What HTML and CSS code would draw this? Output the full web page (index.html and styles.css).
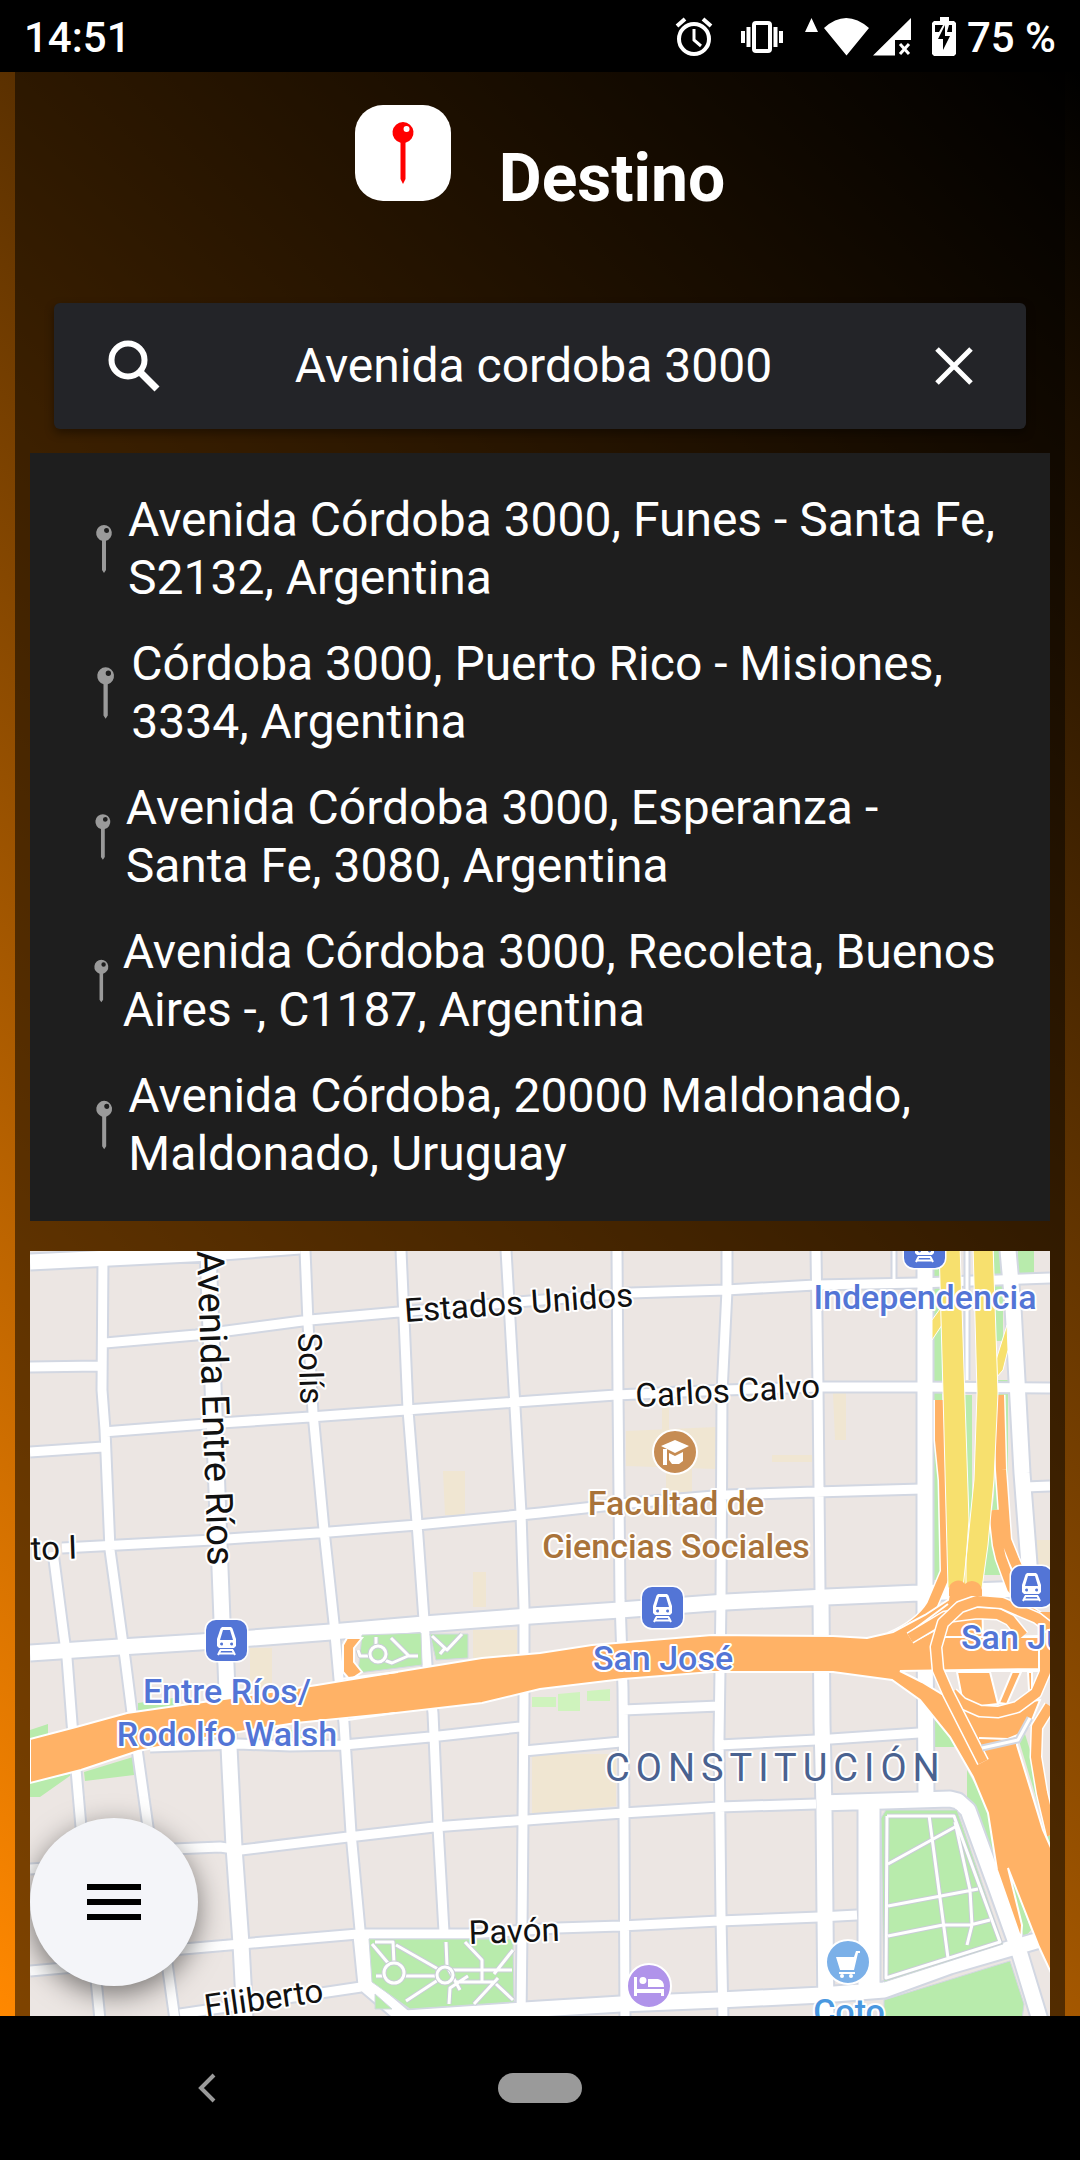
FILE: index.html
```html
<!DOCTYPE html>
<html lang="es">
<head>
<meta charset="utf-8">
<meta name="viewport" content="width=device-width, initial-scale=1">
<title>Destino</title>
<link rel="stylesheet" href="styles.css">
</head>
<body>
<svg class="defs" aria-hidden="true">
  <defs>
    <symbol id="pin" viewBox="0 0 48 48">
      <path fill-rule="evenodd" d="M24 0a8 8 0 0 1 2 15.700V45l-2 3-2-3V15.700A8 8 0 0 1 24 0zm2.500 3a2.500 2.500 0 1 0 .1 5a2.500 2.500 0 0 0-.1-5z"/>
    </symbol>
    <symbol id="train" viewBox="0 0 41 41">
      <rect width="41" height="41" rx="10" fill="#5375d6"/>
      <path fill="#fff" fill-rule="evenodd" d="M16 7h9l1.500 1.500L30 19v7l-2 2H13l-2-2v-7l3.500-10.500zM17 10l-3 10h13l-3-10zM15.500 22.500a1.500 1.500 0 1 0 .1 3a1.500 1.500 0 0 0-.1-3zm10 0a1.500 1.500 0 1 0 .1 3a1.500 1.500 0 0 0-.1-3z"/>
      <path stroke="#fff" stroke-width="2" fill="none" d="M14 30h13M13 33.500h15M14.500 30l-2.500 5M26.500 30l2.500 5"/>
    </symbol>
  </defs>
</svg>

<header class="status">
  <span class="status-time">14:51</span>
  <div class="status-icons">
    <svg class="alarm" width="38" height="40" viewBox="0 0 38 40" fill="none" stroke="#fff">
      <circle cx="19" cy="22" r="15" stroke-width="4"/><path stroke-width="4" d="M2 9l8-7M36 9l-8-7"/><path stroke-width="3" d="M19 12v11l7 6"/>
    </svg>
    <svg class="vibrate" width="42" height="40" viewBox="0 0 42 40">
      <rect x="13" y="6" width="16" height="28" rx="2" fill="none" stroke="#fff" stroke-width="4"/>
      <path stroke="#fff" stroke-width="4" d="M2 14v12M7.500 10v20M34.500 10v20M40 14v12"/>
    </svg>
    <svg class="wifi" width="66" height="40" viewBox="0 0 66 40" fill="#fff">
      <path d="M6.500 1L13 15H0zM19 11Q41-9 64 11L41.500 38.500z"/>
    </svg>
    <svg class="signal" width="38" height="40" viewBox="0 0 38 40">
      <path fill="#fff" d="M38 1v22H22v15.500H0z"/><path stroke="#fff" stroke-width="3" d="M27 27l9 10M36 27l-9 10"/>
    </svg>
    <svg class="battery" width="24" height="40" viewBox="0 0 24 40">
      <path fill="#fff" fill-rule="evenodd" d="M8 0h9v4h5l2 2v31l-2 2H2l-2-2V6l2-2h6zM3 8v7h4l4-7zm14 0l-2 7h5V8z"/><path fill="#000" d="M13 8L6 22h5v11l7-14h-5z"/>
    </svg>
    <span class="status-level">75 %</span>
  </div>
</header>

<main class="app">
  <div class="panel">
    <div class="heading">
      <svg class="heading-icon" viewBox="0 0 96 96" aria-hidden="true">
        <rect width="96" height="96" rx="28" fill="#fff"/>
        <path fill="red" fill-rule="evenodd" d="M48 17a10.500 10.500 0 0 1 2.500 20.700V74L48 79l-2.500-5V37.700A10.500 10.500 0 0 1 48 17zm3.500 4a3 3 0 1 0 .1 6a3 3 0 0 0-.1-6z"/>
      </svg>
      <h1 class="title">Destino</h1>
    </div>

    <form class="search">
      <button class="icon-button" type="submit" aria-label="Buscar">
        <svg width="52" height="52" viewBox="0 0 52 52" fill="none" stroke="#fff"><circle cx="20" cy="20" r="16.500" stroke-width="6"/><path stroke-width="7" d="M31 31l18 18"/></svg>
      </button>
      <input class="search-input" type="text" aria-label="Dirección de destino" value="Avenida cordoba 3000">
      <button class="icon-button" type="button" aria-label="Borrar">
        <svg width="38" height="38" viewBox="0 0 38 38" stroke="#fff" stroke-width="5"><path d="M2 2l34 34M36 2L2 36"/></svg>
      </button>
    </form>

    <ul class="results">
      <li class="result"><svg class="pin"><use href="#pin"/></svg><span>Avenida Córdoba 3000, Funes - Santa Fe, S2132, Argentina</span></li>
      <li class="result"><svg class="pin"><use href="#pin"/></svg><span>Córdoba 3000, Puerto Rico - Misiones, 3334, Argentina</span></li>
      <li class="result"><svg class="pin"><use href="#pin"/></svg><span>Avenida Córdoba 3000, Esperanza - Santa Fe, 3080, Argentina</span></li>
      <li class="result"><svg class="pin"><use href="#pin"/></svg><span>Avenida Córdoba 3000, Recoleta, Buenos Aires -, C1187, Argentina</span></li>
      <li class="result"><svg class="pin"><use href="#pin"/></svg><span>Avenida Córdoba, 20000 Maldonado, Maldonado, Uruguay</span></li>
    </ul>

    <section class="map" aria-label="Mapa">
      <svg class="map-canvas" viewBox="30 1251 1020 765" preserveAspectRatio="xMidYMid slice">
        <defs>
          <path id="minor" d="M103 1258L102 1390L105 1430L110 1550L122 1637L125 1658L132 1713L148 1827L175 2020M53 1552L64 1637L67 1658L72 1723L81 1827L100 2020
            M305 1250L308 1323L313 1413L324 1530L334 1623L339 1679L344 1723L351 1833L360 1930M401 1250L408 1410L417 1523L424 1620L427 1665L433 1713L438 1827L444 1932
            M506 1250L515 1407L521 1513L524 1607L524 1700L523 1820L522 1930L521 2020M617 1250L618 1393L620 1600L623 1689L624 1809L625 2020
            M727 1250V1290L722 1393L721 1600L719 1740L721 1916L723 2020M816 1250L818 1387L820 1590
            M105 1343L196 1335L310 1320L399 1312L506 1303L630 1293L726 1290L815 1285L919 1283L1050 1278M30 1367L100 1366
            M103 1432L206 1424L310 1417L406 1410L516 1402L616 1395L725 1390L822 1387L919 1387L1050 1388M30 1452L103 1447
            M62 1548L213 1540L317 1533L417 1525L540 1513L630 1503L726 1495L815 1492L922 1489M1025 1487L1050 1486
            M150 1747L238 1744L290 1746L344 1745L430 1737L520 1727M524 1751L621 1742M623 1710L719 1706M719 1745L816 1740L919 1733
            M150 1850L220 1847L241 1850L348 1837L434 1827L540 1819L623 1813L719 1807L816 1804M30 1869L60 1867
            M160 1951L241 1944L358 1934L468 1934L557 1928L621 1926L719 1921L819 1917L857 1915M30 1971L75 1967M180 2014L361 1987"/>
          <path id="major" d="M208 1250L215 1440L222 1620L226 1665L229 1747L234 1847L241 1944L245 2020M30 1262L210 1253L300 1246
            M30 1653L120 1647L200 1642L331 1632L424 1624L516 1617L620 1610L726 1602L826 1597L919 1593L1050 1588
            M821 1600L822 1723L824 1809L826 2020M925 1250V1615L926 1799M1008 1250L1013 1307L1022 1473L1031 1590
            M820 1803L950 1799L958 1801L968 1810L998 1892L1019 1951L1040 2020
            M361 1935L366 1985L405 2018L540 2009L621 2004L719 2000L822 1995L884 1990L950 1966L1050 1937M872 1803V1992M866 1803V1992"/>
          <path id="walks" d="M887 1816H954L1000 1942L886 1978L887 1816M929 1815L948 1958M888 1864L955 1827M888 1906L978 1889M888 1936L943 1925H970L990 1920M955 1822L970 1890L972 1925L967 1945
            M372 1944L388 1963M375 1942H393L394 1963M396 1945L438 1969M376 1976H384M404 1976H436M406 2001L438 1980M446 1942L447 1966L460 1990M465 1942L482 1960V1982M450 1970H512M455 1982H494M494 1974L513 1950M496 1984L513 2000M498 1978L474 2004M449 2004L450 1988L468 1976
            M358 1650L360 1656H370M376 1637V1646M384 1660L392 1663L408 1656H418M391 1638L409 1656M432 1636L447 1650L462 1634M445 1648L440 1654"/>
          <path id="feeders" d="M940 1400V1440L944 1480L946 1572L932 1605Q920 1625 890 1638M948 1410L947 1500M999 1395L1001 1470L1006 1540L1014 1560L1024 1582M994 1510L998 1545L1001 1558L1012 1588L1030 1612L1050 1625"/>
          <path id="loop" d="M1050 1628L1037 1618L1002 1603L977 1601L960 1607L943 1623L936 1647L938 1670L948 1693L983 1762"/>
          <path id="arcs" d="M910 1638L945 1617L977 1613L998 1614L1010 1620L1023 1636M952 1693L962 1703L980 1711L998 1712L1017 1707L1036 1693L1045 1672V1612M1050 1706L1037 1727L1036 1757L1042 1793L1052 1835"/>
        </defs>
        <rect x="30" y="1251" width="1020" height="765" fill="#ece6e3"/>
        <path fill="#f0e6d2" d="M532 1754h84v52l-84 8zM443 1471h22v44h-20zM473 1572h13v35h-13zM626 1431l90-4v42l-90-3zM662 1407h7v24h-7zM666 1468h26v24h-26zM833 1393h13v47h-11zM772 1455h40v7h-40zM250 1648h22v44h-22zM473 1630h44v28h-44zM1034 1540h16v30h-16z"/>
        <path fill="#b8ebac" d="M84 1772l49-15 1 18-49 6zM30 1730l18-6v16l-18 5zM138 1703l42-6v14l-42 3zM30 1782l44-9-34 24H30zM932 1255h10v325h-10zM964 1395h8v150h-8zM994 1251h9v90h-9zM998 1380h10v195h-24l10-80zM1018 1251h16v25h-16zM935 1718l14 16 6 13h-20zM967 1770l23 40 10 60-22-50-11-18zM1006 1860l25 70-10 12zM1017 1728l8 6 25 80v30l-30-100zM285 1730h28v8h-28z"/>
        <path fill="#cff3bd" d="M532 1697h24v10h-24zM558 1694l22-2v19h-22zM587 1691l23-2v12h-23z"/>
        <use href="#minor" class="minor-case"/><use href="#major" class="major-case"/>
        <path class="lane-case" d="M894 1250V1283"/>
        <use href="#minor" class="minor"/><use href="#major" class="major"/>
        <path class="lane" d="M894 1250V1283"/>
        <path class="park" d="M881 1818L886 1810H957L1003 1944L884 1982zM884 2000L1010 1961L1024 2004L1022 2020H884zM369 1939H513L514 2002L410 2009L372 1982zM375 1994L392 2009H375zM362 1635L421 1633L422 1665L358 1673zM430 1634H468V1658L436 1660z"/>
        <use href="#walks" class="walks-case"/><use href="#walks" class="walks"/>
        <circle class="walks-case" cx="394" cy="1973" r="10"/><circle class="walks" cx="394" cy="1973" r="10"/>
        <circle class="walks-case" cx="445" cy="1975" r="8"/><circle class="walks" cx="445" cy="1975" r="8"/>
        <circle class="walks-case" cx="378" cy="1654" r="8"/><circle class="walks" cx="378" cy="1654" r="8"/>
        <path class="lane-case" d="M967 1251V1380"/><path class="lane" d="M967 1251V1380"/>
        <path class="highway" d="M343 1645L347 1638H362L354 1648V1662L362 1672L350 1680L343 1672z"/>
        <use href="#feeders" class="ramps-case"/><use href="#feeders" class="ramps"/>
        <path class="highway" d="M30 1739L76 1727L127 1713L224 1699L317 1685L396 1672L482 1658L540 1653L592 1645L712 1635L833 1636L867 1638L893 1632L925 1615L948 1600L950 1588H982L983 1637L1039 1636V1669L900 1671L922 1682L945 1696L957 1709L1040 1700L1030 1725L1017 1738L1017 1745L1043 1830L1052 1850V1975L1039 1947L1008 1868L1022 1925L1021 1939L997 1870L988 1813L973 1777L950 1737L920 1700L892 1680L833 1672H712L623 1679L540 1689L482 1703L396 1713L296 1723L220 1735L138 1751L81 1770L30 1783z"/>
        <path fill="#ece6e3" d="M945 1673H1040L1034 1692L1015 1703L997 1706L970 1700z"/>
        <path class="highway" d="M957 1672H990L998 1704L980 1706L962 1698zM1012 1672H1021L1007 1704L999 1703zM1028 1672H1032V1692L1029 1690z"/>
        <path class="seam" d="M340 1679L398 1672M348 1720L395 1713M908 1634L948 1604M918 1639L950 1622M945 1637H1040M945 1671H1040M979 1738L1008 1739L1025 1732"/>
        <use href="#arcs" class="ramps-case"/><use href="#arcs" class="ramps"/>
        <use href="#loop" class="ramps-case"/><use href="#loop" class="ramps"/>
        <path class="lane-case" d="M982 1748L1018 1740L1030 1718"/><path class="lane" d="M982 1748L1018 1740L1030 1718"/>
        <path class="avenue" d="M932 1320L942 1306V1325L932 1340zM1007 1325L996 1360V1378L1003 1370L1008 1350z"/>
        <path class="avenue" d="M939 1245H960L965 1400L969 1520L966 1560V1588H948L943 1393zM973 1245H993L998 1393L994 1480L988 1545L982 1588H963L966 1560L974 1480L977 1393z"/>
        <path fill="#ffb266" d="M949 1590a9 9 0 0 1 16-6a10 10 0 0 1 17 6v6h-33z"/>

        <g class="label street">
          <text transform="translate(405 1322) rotate(-4)">Estados Unidos</text>
          <text transform="translate(636 1407) rotate(-3)">Carlos Calvo</text>
          <text transform="translate(298 1333) rotate(88)">Solís</text>
          <text transform="translate(31 1560) rotate(-2)">to I</text>
          <text transform="translate(469 1944) rotate(-2)">Pavón</text>
          <text transform="translate(206 2018) rotate(-8)">Filiberto</text>
          <text class="avenue-name" transform="translate(197 1251) rotate(88)">Avenida Entre Ríos</text>
        </g>
        <text class="label district" x="605" y="1781">CONSTITUCIÓN</text>
        <g class="label station">
          <text x="925" y="1309" text-anchor="middle">Independencia</text>
          <text x="663" y="1670" text-anchor="middle">San José</text>
          <text x="961" y="1649">San Juan</text>
          <text x="227" y="1703" text-anchor="middle">Entre Ríos/</text>
          <text x="227" y="1746" text-anchor="middle">Rodolfo Walsh</text>
        </g>
        <g class="label school">
          <text x="676" y="1515" text-anchor="middle">Facultad de</text>
          <text x="676" y="1558" text-anchor="middle">Ciencias Sociales</text>
        </g>
        <text class="label shop" x="849" y="2023" text-anchor="middle">Coto</text>

        <g class="badge-edge"><rect x="206" y="1620" width="41" height="41" rx="10"/><rect x="642" y="1587" width="41" height="41" rx="10"/><rect x="1011" y="1566" width="41" height="41" rx="10"/><rect x="904" y="1227" width="41" height="41" rx="10"/></g>
        <use href="#train" x="206" y="1620" width="41" height="41"/>
        <use href="#train" x="642" y="1587" width="41" height="41"/>
        <use href="#train" x="1011" y="1566" width="41" height="41"/>
        <use href="#train" x="904" y="1227" width="41" height="41"/>
        <g class="poi">
          <circle cx="675" cy="1452" r="22" fill="#c68c53"/>
          <circle cx="649" cy="1986" r="22" fill="#b093ea"/>
          <circle cx="848" cy="1962" r="22" fill="#7bb0e8"/>
        </g>
        <path fill="#fff" d="M675 1440l14 6-14 7-14-7zM669 1453l6 3 8-4v9l-4 3h-7l-3-4zM663 1449h4v16h-4z"/>
        <path fill="#fff" d="M634 1977h3v12h27v7h-3v-3h-24v3h-3zM643 1977a3.500 3.500 0 1 1-.1 7a3.500 3.500 0 0 1 .1-7zM648 1979h10q6 1 6 8h-16z"/>
        <path fill="#fff" d="M836 1957h18l2-6h4v2h-2l-4 17h-14zM839 1972h16v2h-16z"/><circle cx="842" cy="1976" r="2" fill="#fff"/><circle cx="851" cy="1976" r="2" fill="#fff"/>
      </svg>
      <button class="menu-button" type="button" aria-label="Menú"><span></span><span></span><span></span></button>
    </section>
  </div>
</main>

<nav class="navbar" aria-label="Sistema">
  <button class="nav-back" type="button" aria-label="Atrás"><svg width="18" height="30" viewBox="0 0 18 30" fill="none" stroke="#9a9a9a" stroke-width="4"><path d="M16 2L3 15l13 13"/></svg></button>
  <button class="nav-home" type="button" aria-label="Inicio"></button>
</nav>
</body>
</html>
```
FILE: styles.css
```css
* { box-sizing: border-box; }
body {
  margin: 0;
  min-height: 100vh;
  display: flex;
  flex-direction: column;
  background: #000;
  color: #fff;
  font-family: Roboto, "Liberation Sans", sans-serif;
}
button { border: 0; padding: 0; background: none; color: inherit; font: inherit; }
.defs { position: absolute; width: 0; height: 0; }

.status {
  display: flex;
  justify-content: space-between;
  align-items: center;
  height: 72px;
  padding: 2px 24px 0;
  font-size: 42px;
  font-weight: 500;
}
.status-icons { display: flex; align-items: center; }
.vibrate { margin-left: 28px; }
.wifi { margin-left: 22px; }
.signal { margin-left: 2px; }
.battery { margin: 0 11px 0 21px; }

.app { flex: 1; display: flex; padding: 0 15px; background: linear-gradient(45deg, #ff8800, #000); }
.panel { flex: 1; min-width: 0; display: flex; flex-direction: column; padding: 0 15px; background: rgba(0, 0, 0, .5); }

.heading { display: flex; justify-content: center; align-items: baseline; gap: 48px; padding-top: 33px; margin-bottom: 86px; }
.heading-icon { width: 96px; height: 96px; }
.title { margin: 0; font-size: 66px; line-height: 77px; font-weight: 700; }

.search {
  display: flex;
  align-items: center;
  justify-content: space-between;
  height: 126px;
  margin: 0 24px;
  padding: 0 53px 0 54px;
  border-radius: 6px;
  background: #232428;
  box-shadow: 0 4px 10px rgba(0, 0, 0, .4);
}
.icon-button { display: flex; }
.search-input { flex: 1; min-width: 0; border: 0; outline: 0; padding: 0 28px 2px 0; background: none; color: inherit; font: inherit; font-size: 48px; text-align: center; }

.results { list-style: none; display: flex; flex-direction: column; gap: 28px; margin: 24px 0 30px; padding: 38px 45px 38px 50px; background: #1e1e1e; }
.result { display: flex; align-items: center; font-size: 48px; line-height: 58px; }
.pin { flex: 0 1 68px; width: 68px; min-width: 0; height: 58px; fill: #9a9a9a; }

.map { position: relative; flex: 1; min-height: 320px; display: flex; overflow: hidden; }
.map-canvas { position: absolute; inset: 0; width: 100%; height: 100%; }
.map-canvas use, .walks, .walks-case { fill: none; stroke-linejoin: round; }
.minor { stroke: #fff; stroke-width: 9px; }
.minor-case { stroke: #d2d7e2; stroke-width: 13px; }
.major { stroke: #fff; stroke-width: 15px; }
.major-case { stroke: #d2d7e2; stroke-width: 19px; }
.lane { fill: none; stroke: #fff; stroke-width: 3px; }
.lane-case { fill: none; stroke: #d2d7e2; stroke-width: 7px; }
.park { fill: #b8ebac; stroke: #d2d7e2; stroke-width: 1px; }
.walks { stroke: #fff; stroke-width: 3px; }
.walks-case { stroke: #c9cdd6; stroke-width: 5px; }
.highway { fill: #ffb266; stroke: #fff; stroke-width: 2px; }
.seam { fill: none; stroke: #fff; stroke-width: 2px; }
.ramps { stroke: #ffb266; stroke-width: 10px; }
.ramps-case { stroke: #fff; stroke-width: 13px; }
.avenue { fill: #f7e06e; stroke: #fff; stroke-width: 1px; }
.badge-edge { stroke: #fff; stroke-width: 3px; }
.poi { stroke: #fff; stroke-width: 2px; }
.label { font-size: 34px; font-weight: 500; paint-order: stroke; stroke: #fff; stroke-width: 4px; stroke-linejoin: round; }
.street { font-size: 33px; font-weight: 400; fill: #111; }
.avenue-name { font-size: 38px; }
.station { fill: #5375d6; }
.school { fill: #a9733a; }
.shop { fill: #4a98e0; }
.district { font-size: 38px; font-weight: 400; letter-spacing: 6px; fill: #4a6290; }

.menu-button {
  position: absolute;
  left: 0;
  bottom: 30px;
  width: 168px;
  height: 168px;
  border-radius: 50%;
  display: flex;
  flex-direction: column;
  align-items: center;
  justify-content: center;
  gap: 9px;
  background: #f4f5f9;
  box-shadow: 0 8px 28px rgba(0, 0, 0, .5);
}
.menu-button span { width: 54px; height: 6px; background: #000; }

.navbar { display: grid; grid-template-columns: 1fr 84px 1fr; align-items: center; height: 144px; }
.nav-back { justify-self: center; display: flex; margin-right: 84px; }
.nav-home { height: 30px; border-radius: 15px; background: #9a9a9a; }
```
